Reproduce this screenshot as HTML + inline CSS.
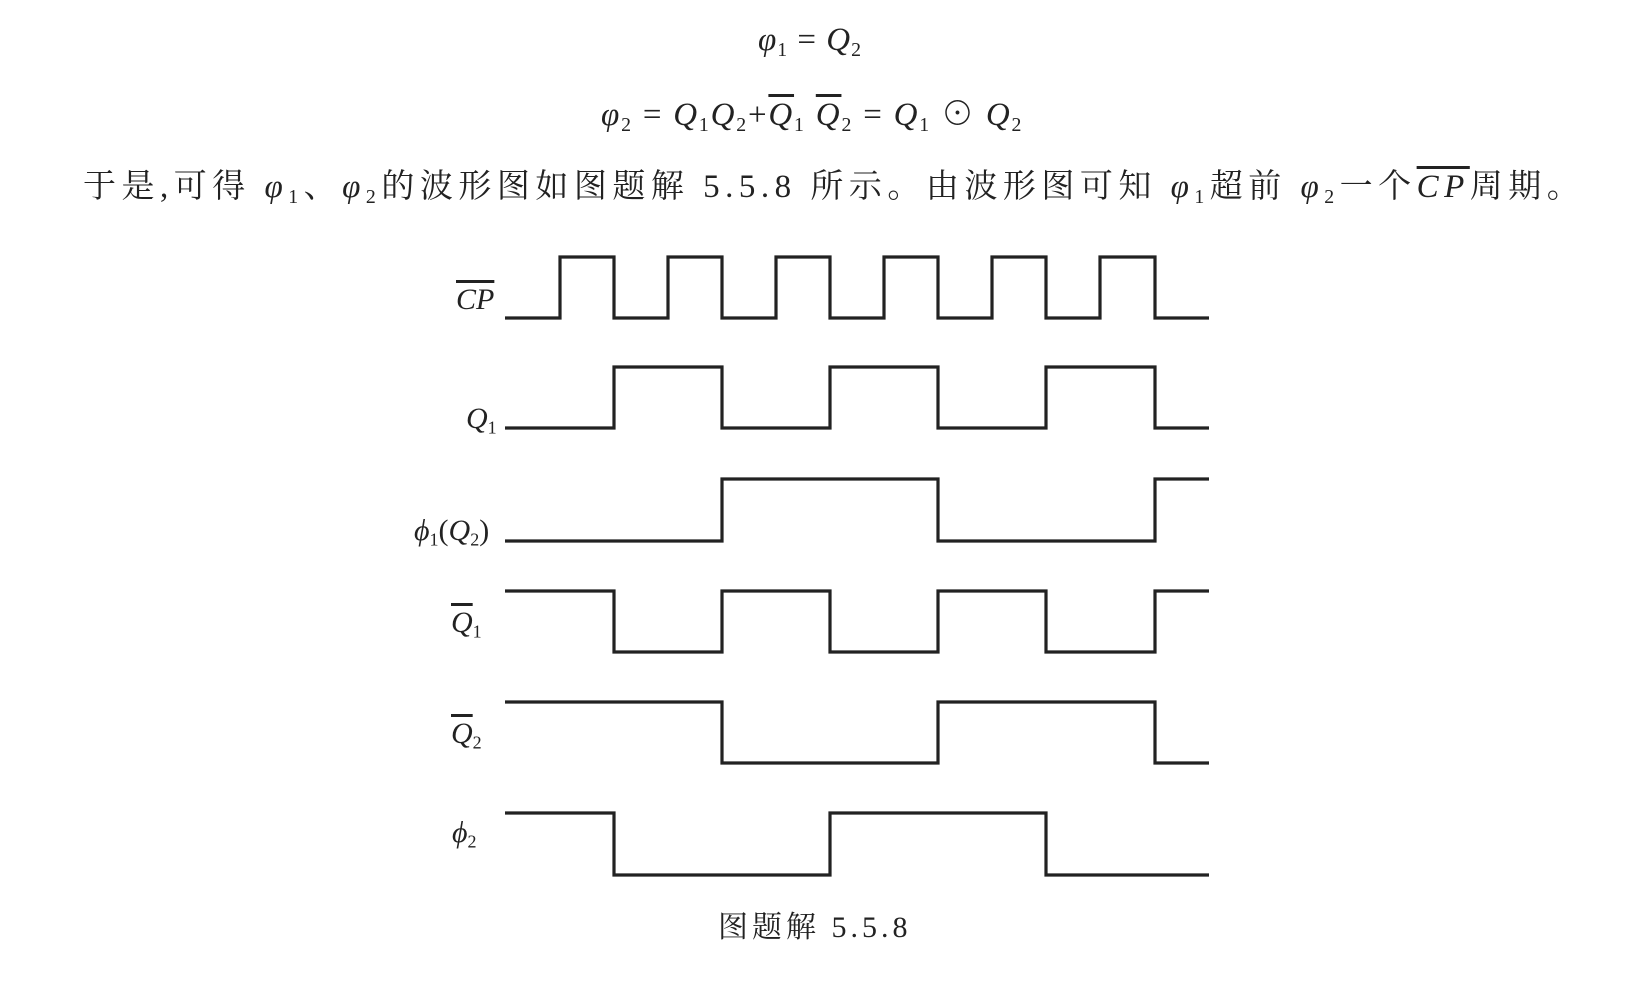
<!DOCTYPE html>
<html><head><meta charset="utf-8"><style>
body{margin:0;background:#fff;width:1632px;height:994px;position:relative;overflow:hidden;font-family:"Liberation Serif","Noto Serif CJK SC",serif;color:#222}
.a{position:absolute;white-space:nowrap}
i{font-style:italic}
sub{font-size:60%;vertical-align:-0.3em}
.ol{text-decoration:overline}
</style></head><body>
<div class="a" style="left:758px;top:22px;font-size:33px;letter-spacing:1px"><i>φ</i><sub>1</sub> = <i>Q</i><sub>2</sub></div>
<div class="a" style="left:601px;top:88px;font-size:33px;letter-spacing:1.8px"><i>φ</i><sub>2</sub> = <i>Q</i><sub>1</sub><i>Q</i><sub>2</sub>+<i class="ol">Q</i><sub>1</sub> <i class="ol">Q</i><sub>2</sub> = <i>Q</i><sub>1</sub> ⊙ <i>Q</i><sub>2</sub></div>
<div class="a" style="left:83px;top:160px;font-size:33px;letter-spacing:5.5px">于是,可得 <i>φ</i><sub>1</sub>、<i>φ</i><sub>2</sub>的波形图如图题解 5.5.8 所示。由波形图可知 <i>φ</i><sub>1</sub>超前 <i>φ</i><sub>2</sub>一个<i class="ol">CP</i>周期。</div>
<div class="a" style="left:718px;top:902px;font-size:30px;letter-spacing:4px">图题解 5.5.8</div>
<div class="a" style="left:456px;top:283px;font-size:30px"><i class="ol">CP</i></div>
<div class="a" style="left:466px;top:402px;font-size:30px"><i>Q</i><sub>1</sub></div>
<div class="a" style="left:414px;top:514px;font-size:30px"><i>ϕ</i><sub>1</sub>(<i>Q</i><sub>2</sub>)</div>
<div class="a" style="left:451px;top:606px;font-size:30px"><i class="ol">Q</i><sub>1</sub></div>
<div class="a" style="left:451px;top:717px;font-size:30px"><i class="ol">Q</i><sub>2</sub></div>
<div class="a" style="left:452px;top:816px;font-size:30px"><i>ϕ</i><sub>2</sub></div>
<svg class="a" style="left:0;top:0" width="1632" height="994">
<g fill="none" stroke="#222" stroke-width="3.2">
<path d="M505 318H560V257H614V318H668V257H722V318H776V257H830V318H884V257H938V318H992V257H1046V318H1100V257H1155V318H1209"/>
<path d="M505 428H614V367H722V428H830V367H938V428H1046V367H1155V428H1209"/>
<path d="M505 541H722V479H938V541H1155V479H1209"/>
<path d="M505 591H614V652H722V591H830V652H938V591H1046V652H1155V591H1209"/>
<path d="M505 702H722V763H938V702H1155V763H1209"/>
<path d="M505 813H614V875H830V813H1046V875H1209"/>
</g></svg>
</body></html>
